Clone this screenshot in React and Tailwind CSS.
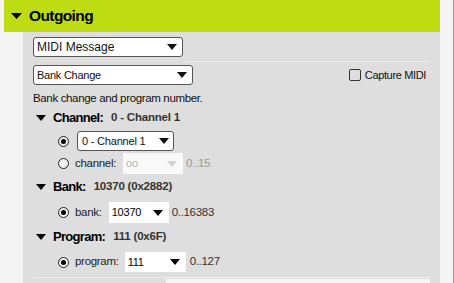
import React from 'react'

const Arrow = ({ className = '' }) => (
  <svg width="10" height="6" viewBox="0 0 10 6" className={className}>
    <path d="M0 0h10L5 6z" fill="currentColor" />
  </svg>
)

function Radio({ checked }) {
  return (
    <div className="flex h-[11px] w-[11px] shrink-0 items-center justify-center rounded-full border border-[#222] bg-[#f2f2f2]">
      {checked && <div className="h-[5px] w-[5px] rounded-full bg-black" />}
    </div>
  )
}

function Section({ title, value }) {
  return (
    <div className="flex h-[16px] items-center">
      <Arrow className="ml-[3px] text-black" />
      <span className="ml-[7px] text-[13px] font-bold tracking-[-0.7px] text-black">{title}</span>
      <span className="ml-[8px] text-[11.5px] font-bold tracking-[-0.2px] text-[#333]">{value}</span>
    </div>
  )
}

function FlatSelect({ value, width, height, disabled }) {
  return (
    <div
      className={`flex shrink-0 items-center justify-between pl-[3px] pr-[6px] text-[11px] tracking-[-0.2px] ${
        disabled ? 'bg-[#f9f9f9] text-[#b4b4b4]' : 'bg-white text-black'
      }`}
      style={{ width, height }}
    >
      <span>{value}</span>
      <Arrow className={disabled ? 'text-[#d2d2d2]' : 'text-black'} />
    </div>
  )
}

export default function App() {
  return (
    <div className="flex h-[283px] w-[454px] overflow-hidden bg-[#f4f4f4] font-['Liberation_Sans',Arial,sans-serif] text-black">
      <div className="flex w-[440px] shrink-0 flex-col pl-[4px]">
        <div className="flex h-[32px] shrink-0 items-center bg-[#bddc12] pl-[7px]">
          <svg width="11" height="6" viewBox="0 0 11 6">
            <path d="M0 0h11L5.5 6z" fill="#000" />
          </svg>
          <span className="ml-[7px] text-[15.5px] font-bold tracking-[-0.6px]">Outgoing</span>
        </div>

        <div className="ml-[19px] flex-1 bg-[#dedede] pl-[10px]">
          {/* message type */}
          <div className="flex h-[30px] items-start pt-[5px]">
            <div className="flex h-[20px] w-[150px] shrink-0 items-center justify-between rounded-[3px] border border-[#555] bg-white pl-[3px] pr-[5px] text-[12px] text-[#111]">
              <span>MIDI Message</span>
              <Arrow />
            </div>
            <div className="mr-[10px] ml-[2px] h-px flex-1 self-end bg-[#ececec]" />
          </div>

          <div className="mt-[3px] flex h-[20px] items-center justify-between pr-[14px]">
            <div className="flex h-[20px] w-[160px] items-center justify-between rounded-[3px] border border-[#555] bg-white pl-[3px] pr-[5px] text-[11px] tracking-[-0.25px] text-[#111]">
              <span>Bank Change</span>
              <Arrow />
            </div>
            <label className="flex items-center text-[11px] tracking-[-0.35px] text-[#111]">
              <span className="h-[12px] w-[12px] rounded-[2px] border border-[#333]" />
              <span className="ml-[4px]">Capture MIDI</span>
            </label>
          </div>

          <p className="mt-[6px] text-[11.5px] leading-[14px] tracking-[-0.35px] text-[#111]">Bank change and program number.</p>

          {/* channel */}
          <div className="mt-[5px]">
            <Section title="Channel:" value="0 - Channel 1" />
          </div>
          <div className="mt-[5px] flex h-[20px] items-center pl-[25px]">
            <Radio checked />
            <div className="ml-[8px] flex h-[20px] w-[97px] items-center justify-between rounded-[3px] border border-[#555] bg-white pl-[4px] pr-[4px] text-[11px] tracking-[-0.2px] text-[#111]">
              <span>0 - Channel 1</span>
              <Arrow />
            </div>
          </div>
          <div className="mt-[2px] flex h-[21px] items-center pl-[25px] text-[11.5px] tracking-[-0.3px]">
            <Radio />
            <span className="ml-[6px] text-[#222]">channel:</span>
            <div className="ml-[7px]">
              <FlatSelect value="oo" width={60} height={21} disabled />
            </div>
            <span className="ml-[3px] text-[#999]">0..15</span>
          </div>

          {/* bank */}
          <div className="mt-[5px]">
            <Section title="Bank:" value="10370 (0x2882)" />
          </div>
          <div className="mt-[7px] flex h-[21px] items-center pl-[25px] text-[11.5px] tracking-[-0.3px]">
            <Radio checked />
            <span className="ml-[6px] text-[#222]">bank:</span>
            <div className="ml-[7px]">
              <FlatSelect value="10370" width={60} height={21} />
            </div>
            <span className="ml-[3px] text-[#333]">0..16383</span>
          </div>

          {/* program */}
          <div className="mt-[6px]">
            <Section title="Program:" value="111 (0x6F)" />
          </div>
          <div className="mt-[7px] flex h-[20px] items-center pl-[25px] text-[11.5px] tracking-[-0.3px]">
            <Radio checked />
            <span className="ml-[6px] text-[#222]">program:</span>
            <div className="ml-[6px]">
              <FlatSelect value="111" width={61} height={20} />
            </div>
            <span className="ml-[4px] text-[#333]">0..127</span>
          </div>

          <div className="mt-[5px] mr-[10px] h-px bg-[#ececec]" />
          <div className="mt-px mr-[10px] ml-[133px] h-[10px] bg-[#f6f6f6]" />
        </div>
      </div>
      <div className="ml-[13px] w-px bg-[#9a9a9a]" />
    </div>
  )
}
